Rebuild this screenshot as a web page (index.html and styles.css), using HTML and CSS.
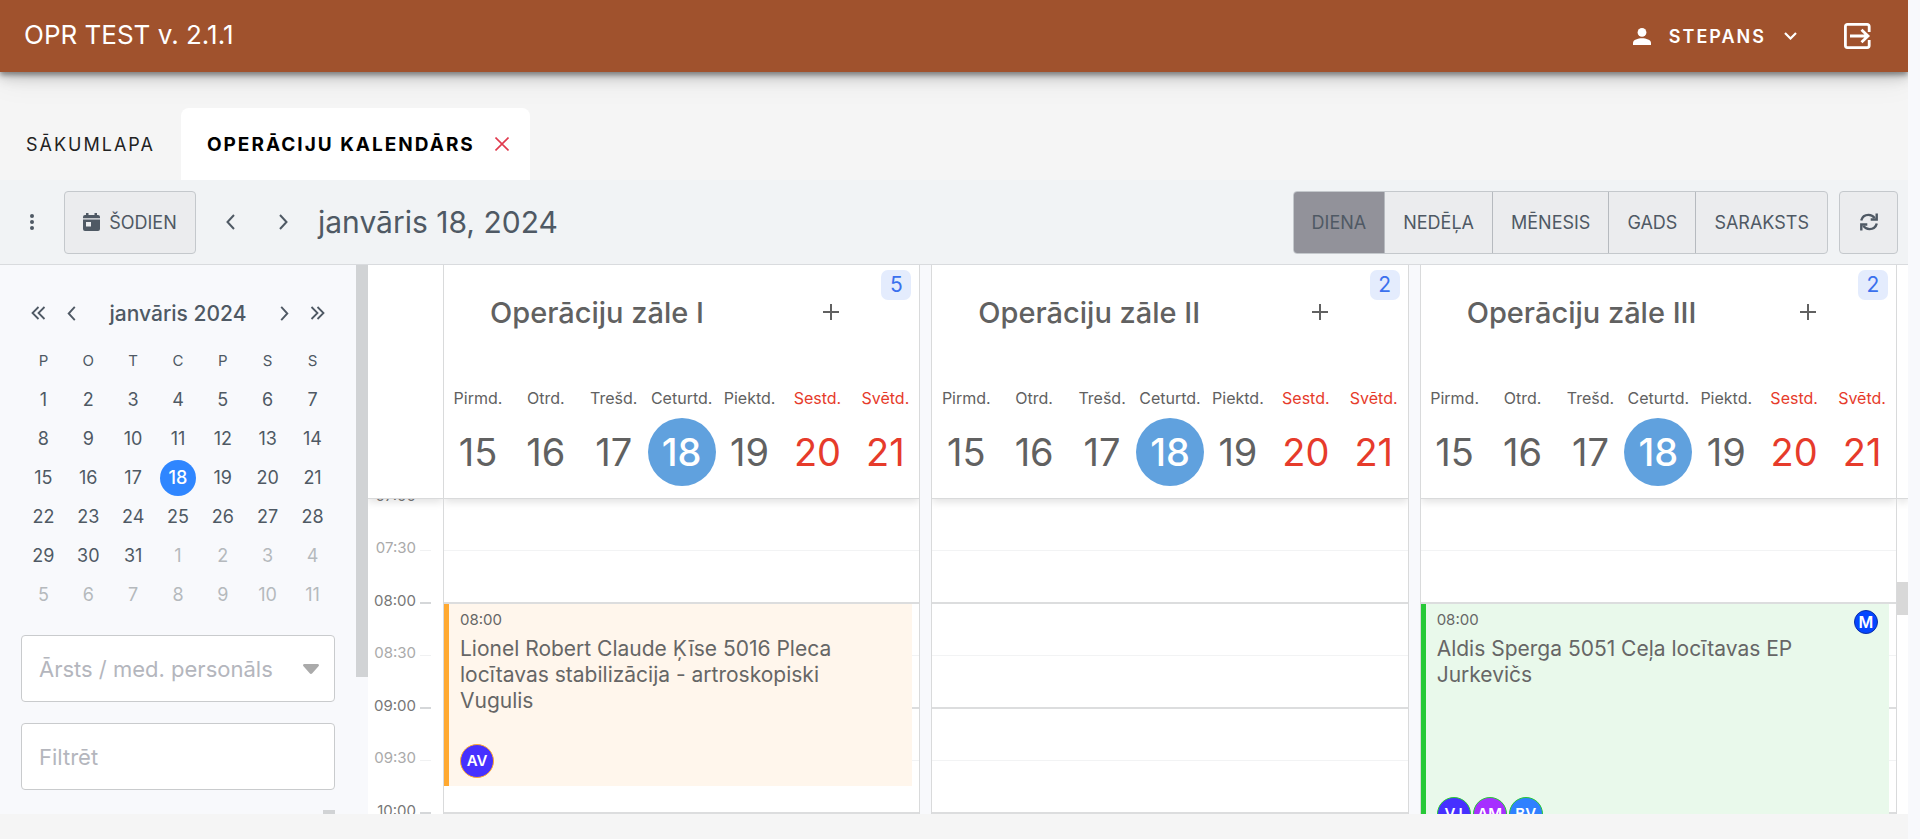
FILE: index.html
```html
<!DOCTYPE html>
<html lang="lv">
<head>
<meta charset="utf-8">
<title>OPR TEST v. 2.1.1</title>
<link rel="stylesheet" href="styles.css">
</head>
<body>
<div class="app">
  <header class="topbar">
    <h1 class="topbar-title">OPR TEST v. 2.1.1</h1>
    <button class="user" type="button">
      <svg class="user-icon" viewBox="0 0 18 17" fill="currentColor"><circle cx="9" cy="4.4" r="4.4"/><path d="M0 17v-2.2c0-3 5-4.6 9-4.6s9 1.600 9 4.600V17z"/></svg>
      <span>STEPANS</span>
      <svg class="user-caret" viewBox="0 0 13 8" fill="none" stroke="currentColor" stroke-width="2.200"><path d="M1 1l5.500 5.500L12 1"/></svg>
    </button>
    <button class="logout" type="button" aria-label="Iziet">
      <svg viewBox="0 0 27 26" fill="none" stroke="currentColor" stroke-width="2.800"><path d="M25.200 9V3.400a2 2 0 0 0-2-2H3.400a2 2 0 0 0-2 2v19.200a2 2 0 0 0 2 2h19.800a2 2 0 0 0 2-2V17"/><path d="M6 13h18M17.500 6.800l6.500 6.200-6.500 6.200"/></svg>
    </button>
  </header>

  <nav class="tabs">
    <a class="tab" href="#home">SĀKUMLAPA</a>
    <div class="tab tab-active">
      <a href="#calendar">OPERĀCIJU KALENDĀRS</a>
      <button class="tab-close" type="button" aria-label="Aizvērt"><svg viewBox="0 0 14 14" fill="none" stroke="currentColor" stroke-width="1.600"><path d="M.5.5l13 13M13.500.5l-13 13"/></svg></button>
    </div>
  </nav>

  <div class="toolbar">
    <button class="icon-btn" type="button" aria-label="Izvēlne"><svg class="dots" viewBox="0 0 4 16" fill="currentColor"><circle cx="2" cy="2" r="2"/><circle cx="2" cy="8" r="2"/><circle cx="2" cy="14" r="2"/></svg></button>
    <button class="btn today" type="button">
      <svg viewBox="0 0 17 18" fill="currentColor" fill-rule="evenodd"><path d="M3 0h2.500v2h6V0H14v2h1a2 2 0 0 1 2 2v1.300H0V4a2 2 0 0 1 2-2h1zM0 6.500h17V16a2 2 0 0 1-2 2H2a2 2 0 0 1-2-2zM3 9v4.500h5V9z"/></svg>
      <span>ŠODIEN</span>
    </button>
    <button class="step step-prev" type="button" aria-label="Iepriekšējā"><svg class="chev" viewBox="0 0 9 16"><path d="M8 1L1.500 8 8 15"/></svg></button>
    <button class="step" type="button" aria-label="Nākamā"><svg class="chev" viewBox="0 0 9 16"><path d="M1 1l6.500 7L1 15"/></svg></button>
    <h2 class="toolbar-title">janvāris 18, 2024</h2>
    <div class="views">
      <button class="view view-on" type="button">DIENA</button>
      <button class="view" type="button">NEDĒĻA</button>
      <button class="view" type="button">MĒNESIS</button>
      <button class="view" type="button">GADS</button>
      <button class="view" type="button">SARAKSTS</button>
    </div>
    <button class="btn refresh" type="button" aria-label="Atjaunot"><svg viewBox="0 0 18 18" fill="none" stroke="currentColor" stroke-width="2.400"><path d="M1.200 7.500C2.200 3.800 5.300 1.900 8.500 1.900c2.700 0 4.600 1 6.200 3.200M16.800 10.500c-1 3.700-4.100 5.600-7.300 5.600-2.700 0-4.600-1-6.200-3.200"/><path d="M16.700.5v6h-6M1.300 17.500v-6h6"/></svg></button>
  </div>

  <main class="main">
    <aside class="side">
      <div class="mini-head">
        <button type="button" aria-label="Iepriekšējais gads"><svg class="dbl" viewBox="0 0 15 14"><path d="M7.500 1l-6 6 6 6M13.500 1l-6 6 6 6"/></svg></button>
        <button type="button" aria-label="Iepriekšējais mēnesis"><svg class="chev chev-s" viewBox="0 0 9 16"><path d="M8 1L1.500 8 8 15"/></svg></button>
        <strong class="mini-title">janvāris 2024</strong>
        <button type="button" aria-label="Nākamais mēnesis"><svg class="chev chev-s" viewBox="0 0 9 16"><path d="M1 1l6.500 7L1 15"/></svg></button>
        <button type="button" aria-label="Nākamais gads"><svg class="dbl" viewBox="0 0 15 14"><path d="M1.500 1l6 6-6 6M7.500 1l6 6-6 6"/></svg></button>
      </div>
      <table class="mini">
        <thead><tr><th>P</th><th>O</th><th>T</th><th>C</th><th>P</th><th>S</th><th>S</th></tr></thead>
        <tbody>
          <tr><td>1</td><td>2</td><td>3</td><td>4</td><td>5</td><td>6</td><td>7</td></tr>
          <tr><td>8</td><td>9</td><td>10</td><td>11</td><td>12</td><td>13</td><td>14</td></tr>
          <tr><td>15</td><td>16</td><td>17</td><td><span class="mini-on">18</span></td><td>19</td><td>20</td><td>21</td></tr>
          <tr><td>22</td><td>23</td><td>24</td><td>25</td><td>26</td><td>27</td><td>28</td></tr>
          <tr><td>29</td><td>30</td><td>31</td><td class="out">1</td><td class="out">2</td><td class="out">3</td><td class="out">4</td></tr>
          <tr><td class="out">5</td><td class="out">6</td><td class="out">7</td><td class="out">8</td><td class="out">9</td><td class="out">10</td><td class="out">11</td></tr>
        </tbody>
      </table>
      <div class="field select-field">
        <select aria-label="Ārsts / med. personāls"><option>Ārsts / med. personāls</option></select>
        <svg class="select-arrow" viewBox="0 0 16 10" fill="currentColor"><path d="M1.500 0h13c1.300 0 2 1.300 1 2.300L9.300 9.200c-.8.900-1.900.9-2.600 0L.5 2.300C-.5 1.300.2 0 1.500 0z"/></svg>
      </div>
      <div class="field"><input type="text" placeholder="Filtrēt" aria-label="Filtrēt"></div>
      <div class="side-scroll"></div>
    </aside>
    <div class="splitter"></div>

    <div class="times">
      <div class="head"></div>
      <div class="time-list">
        <div class="time"><span>07:00</span><i></i></div>
        <div class="time half"><span>07:30</span><i></i></div>
        <div class="time"><span>08:00</span><i></i></div>
        <div class="time half"><span>08:30</span><i></i></div>
        <div class="time"><span>09:00</span><i></i></div>
        <div class="time half"><span>09:30</span><i></i></div>
        <div class="time"><span>10:00</span><i></i></div>
      </div>
    </div>

    <div class="rooms">
      <section class="room">
        <div class="head">
          <div class="room-head"><h3>Operāciju zāle I</h3><button class="add" type="button" aria-label="Pievienot"></button></div>
          <span class="count">5</span>
          <div class="week">
            <div class="wd">Pirmd.<b>15</b></div><div class="wd">Otrd.<b>16</b></div><div class="wd">Trešd.<b>17</b></div><div class="wd wd-on">Ceturtd.<b>18</b></div><div class="wd">Piektd.<b>19</b></div><div class="wd red">Sestd.<b>20</b></div><div class="wd red">Svētd.<b>21</b></div>
          </div>
        </div>
        <div class="slots">
          <div class="slot"></div><div class="slot"></div><div class="slot"></div><div class="slot"></div><div class="slot"></div><div class="slot"></div>
          <article class="event event-orange" style="top:105px;height:182px">
            <time>08:00</time>
            <p>Lionel Robert Claude Ķīse 5016 Pleca locītavas stabilizācija - artroskopiski Vugulis</p>
            <div class="avatars"><span class="av indigo">AV</span></div>
          </article>
        </div>
      </section>
      <section class="room">
        <div class="head">
          <div class="room-head"><h3>Operāciju zāle II</h3><button class="add" type="button" aria-label="Pievienot"></button></div>
          <span class="count">2</span>
          <div class="week">
            <div class="wd">Pirmd.<b>15</b></div><div class="wd">Otrd.<b>16</b></div><div class="wd">Trešd.<b>17</b></div><div class="wd wd-on">Ceturtd.<b>18</b></div><div class="wd">Piektd.<b>19</b></div><div class="wd red">Sestd.<b>20</b></div><div class="wd red">Svētd.<b>21</b></div>
          </div>
        </div>
        <div class="slots">
          <div class="slot"></div><div class="slot"></div><div class="slot"></div><div class="slot"></div><div class="slot"></div><div class="slot"></div>
        </div>
      </section>
      <section class="room">
        <div class="head">
          <div class="room-head"><h3>Operāciju zāle III</h3><button class="add" type="button" aria-label="Pievienot"></button></div>
          <span class="count">2</span>
          <div class="week">
            <div class="wd">Pirmd.<b>15</b></div><div class="wd">Otrd.<b>16</b></div><div class="wd">Trešd.<b>17</b></div><div class="wd wd-on">Ceturtd.<b>18</b></div><div class="wd">Piektd.<b>19</b></div><div class="wd red">Sestd.<b>20</b></div><div class="wd red">Svētd.<b>21</b></div>
          </div>
        </div>
        <div class="slots">
          <div class="slot"></div><div class="slot"></div><div class="slot"></div><div class="slot"></div><div class="slot"></div><div class="slot"></div>
          <article class="event event-green" style="top:105px;height:235px">
            <time>08:00</time>
            <p>Aldis Sperga 5051 Ceļa locītavas EP Jurkevičs</p>
            <span class="mark">M</span>
            <div class="avatars"><span class="av indigo">VJ</span><span class="av purple">AM</span><span class="av blue">BV</span></div>
          </article>
        </div>
      </section>
    </div>
    <div class="scroll"><div class="head"></div><div class="thumb"></div></div>
  </main>
</div>
</body>
</html>
```
FILE: styles.css
```css
* { box-sizing: border-box; }
body { margin: 0; background: #f8f9fc; font-family: Inter, "Noto Sans", sans-serif; color: #4f5964; }
button { font: inherit; color: inherit; background: none; border: 0; padding: 0; cursor: pointer; }
a { color: inherit; text-decoration: none; }
h1, h2, h3, p { margin: 0; font-weight: 400; }
svg { display: block; flex: none; }

.app { display: flex; flex-direction: column; height: 100vh; margin-right: 12px; padding-bottom: 25px; background: #f5f5f5; overflow: hidden; }

.topbar { display: flex; flex: none; align-items: center; height: 72px; padding: 0 37px 0 24px; background: #a0522d; color: #fff; box-shadow: 0 3px 5px rgba(0,0,0,.36), 0 6px 12px rgba(0,0,0,.18), 0 6px 32px rgba(0,0,0,.08); z-index: 2; }
.topbar-title { font-size: 26px; line-height: 28px; padding-bottom: 2px; }
.user { display: flex; align-items: center; margin-left: auto; font-size: 18px; font-weight: 600; letter-spacing: 2px; }
.user-icon { width: 18px; height: 17px; margin-right: 18px; }
.user-caret { width: 13px; height: 8px; margin-left: 18px; }
.logout { margin-left: 47px; }
.logout svg { width: 27px; height: 26px; }

.tabs { display: flex; flex: none; align-items: flex-end; height: 108px; font-size: 18px; letter-spacing: 2px; color: #222; }
.tab { display: flex; align-items: center; height: 72px; padding: 0 26px; }
.tab-active { padding: 0 21px 0 26px; background: #fff; border-radius: 8px 8px 0 0; color: #000; font-weight: 700; font-size: 19px; z-index: 3; }
.tab-close { margin-left: 20px; color: #e03a4e; }
.tab-close svg { width: 14px; height: 14px; }

.toolbar { display: flex; flex: none; align-items: center; height: 85px; padding: 0 10px 0 20px; background: #f1f3f5; border-bottom: 1px solid #d9dbde; font-size: 18px; }
.icon-btn { display: grid; place-items: center; width: 24px; height: 24px; margin-right: 20px; }
.dots { width: 4px; height: 16px; }
.btn { display: flex; align-items: center; justify-content: center; height: 63px; border: 1px solid #c4c8cc; border-radius: 4px; background: #ebecee; }
.today { width: 132px; gap: 9px; }
.today svg { width: 17px; height: 18px; }
.step { display: grid; place-items: center; width: 53px; height: 53px; }
.step-prev { margin-left: 8px; }
.chev { width: 9px; height: 16px; fill: none; stroke: currentColor; stroke-width: 2; }
.chev-s { width: 9px; height: 15px; }
.dbl { width: 15px; height: 14px; fill: none; stroke: currentColor; stroke-width: 1.800; }
.toolbar-title { margin-left: 8px; font-size: 30px; }
.views { display: flex; margin-left: auto; margin-right: 11px; height: 63px; border: 1px solid #c4c8cc; border-radius: 4px; background: #ebecee; overflow: hidden; }
.view { padding: 0 18px; border-left: 1px solid #b6babf; }
.view:first-child { border-left: 0; }
.view-on { background: #92929a; }
.refresh { width: 59px; }
.refresh svg { width: 18px; height: 18px; }

.main { display: flex; flex: 1; min-height: 0; overflow: hidden; background: #f8f9fc; }
.side { display: flex; flex-direction: column; flex: none; width: 356px; padding: 31px 21px 0; }
.mini-head { display: flex; align-items: center; flex: none; height: 34px; margin: 0 10px; gap: 21px; }
.mini-head button { flex: none; }
.mini-title { flex: 1; text-align: center; font-size: 21px; font-weight: 500; white-space: nowrap; }
.mini { flex: none; width: 314px; margin-top: 11px; border-collapse: collapse; table-layout: fixed; font-size: 18px; text-align: center; }
.mini th { height: 39px; padding: 0; font-size: 15px; font-weight: 400; }
.mini td { height: 39px; padding: 0; }
.mini .out { color: #b5b9bd; }
.mini-on { display: grid; place-items: center; width: 36px; height: 36px; margin: auto; border-radius: 50%; background: #2f86ff; color: #fff; font-weight: 500; }
.field { flex: none; height: 67px; margin-top: 21px; }
.select-field { display: grid; }
.select-field > * { grid-area: 1 / 1; }
.field select, .field input { appearance: none; width: 100%; height: 100%; padding: 0 17px; border: 1px solid #c9cbcd; border-radius: 4px; background: #fff; color: #b4b6bd; font: inherit; font-size: 22px; outline: 0; }
.field input::placeholder { color: #b4b6bd; opacity: 1; }
.select-arrow { width: 16px; height: 10px; margin-right: 16px; place-self: center end; color: #aaa; pointer-events: none; }
.side-scroll { flex: none; align-self: flex-end; width: 12px; height: 20px; margin-top: 20px; background: #d1d3d5; }
.splitter { flex: none; width: 12px; height: 412px; background: #d1d3d5; }

.head { flex: none; height: 234px; background: #fff; border-bottom: 1px solid #d9dadb; box-shadow: 0 3px 8px rgba(0,0,0,.12); position: relative; z-index: 1; }
.times { display: flex; flex-direction: column; flex: none; width: 75px; background: #fff; overflow: hidden; }
.time-list { margin-top: -13px; }
.time { display: flex; justify-content: flex-end; gap: 4px; height: 52px; padding-right: 12px; line-height: 20px; font-size: 15px; color: #777; }
.time.half { height: 53px; color: #aaa; }
.time i { width: 11px; height: 2px; margin-top: 11px; background: #d5d7d9; }
.time.half i { height: 1px; margin-top: 12px; background: #f0f1f2; }

.rooms { display: flex; flex: 1; gap: 11px; min-width: 0; }
.room { display: flex; flex-direction: column; flex: 1 1 0; min-width: 0; background: #fff; border: solid #d9dadb; border-width: 0 1px; overflow: hidden; color: #616161; }
.room-head { display: flex; align-items: center; justify-content: space-between; height: 94px; padding: 0 80px 0 46px; }
.room-head h3 { font-size: 29px; font-weight: 500; }
.add { width: 16px; height: 16px; background: linear-gradient(#616161, #616161) center / 16px 2px no-repeat, linear-gradient(#616161, #616161) center / 2px 16px no-repeat; }
.count { position: absolute; top: 5px; right: 8px; width: 30px; height: 30px; border-radius: 7px; background: #e4ecfd; color: #3b71ee; font-size: 21px; line-height: 30px; text-align: center; }
.week { display: grid; grid-template-columns: repeat(7, minmax(0, 1fr)); margin-top: 27px; }
.wd { display: flex; flex-direction: column; align-items: center; line-height: 24px; font-size: 16px; white-space: nowrap; }
.wd b { display: grid; place-items: center; width: 68px; height: 68px; margin-top: 8px; border-radius: 50%; font-size: 38px; font-weight: 400; }
.wd-on b { background: #60a1de; color: #fff; font-weight: 500; }
.red { color: #e63b2b; }
.slots { position: relative; flex: 1; }
.slot { height: 52px; border-bottom: 1px solid #f2f3f4; }
.slot:nth-child(even) { height: 53px; border-bottom: 2px solid #dcddde; }
.event { position: absolute; left: 0; right: 7px; display: flex; flex-direction: column; padding: 6px 10px 8px 11px; border-left: 5px solid; color: #666; }
.event-orange { background: #fff6ec; border-color: #ffa931; --line: #ffa931; }
.event-green { background: #e9f9eb; border-color: #27c937; --line: #27c937; }
.event time { font-size: 15px; line-height: 20px; }
.event p { margin-top: 6px; padding-right: 32px; font-size: 21px; line-height: 26px; }
.avatars { display: flex; gap: 2px; margin-top: auto; }
.av { width: 34px; height: 34px; border: 1px solid var(--line); border-radius: 50%; color: #fff; font-size: 15px; font-weight: 600; line-height: 32px; text-align: center; }
.indigo { background: #4630ff; }
.purple { background: #a62fff; }
.blue { background: #2f80ff; }
.mark { position: absolute; top: 6px; right: 11px; width: 24px; height: 24px; border: 1px solid #0b2fa8; border-radius: 50%; background: #0546ff; color: #fff; font-size: 16px; font-weight: 600; line-height: 22px; text-align: center; }
.scroll { flex: none; width: 11px; background: #fff; overflow: hidden; }
.thumb { height: 33px; margin-top: 83px; background: #d8d8d8; }
```
